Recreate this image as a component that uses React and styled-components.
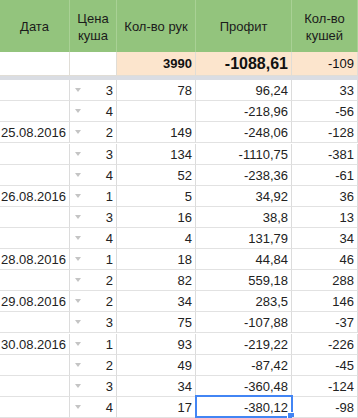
import React from "react";
import styled, { createGlobalStyle } from "styled-components";

const Global = createGlobalStyle`
  body {
    margin: 0;
    background: #fff;
    font-family: "Liberation Sans", Arial, sans-serif;
  }
`;

const Sheet = styled.div`
  display: grid;
  grid-template-columns: 70px 47px 79px 96px 66px;
  width: 358px;
  height: 418px;
  overflow: hidden;
  color: #222;
  font-size: 13px;
`;

const Head = styled.div`
  height: 52px;
  box-sizing: border-box;
  background: #93c47d;
  border-right: 1px solid #a9d195;
  display: flex;
  align-items: center;
  justify-content: center;
  text-align: center;
  line-height: 17px;
  color: #1b1b1b;
  padding-top: 1px;
`;

const Total = styled.div`
  height: 24px;
  box-sizing: border-box;
  background: ${(p) => (p.$fill ? "#fce5cd" : "#fff")};
  border-right: 1px solid #e0ddd6;
  border-bottom: 1px solid #e0ddd6;
  display: flex;
  align-items: center;
  justify-content: flex-end;
  padding-right: 3px;
  font-weight: ${(p) => (p.$bold ? 700 : 400)};
  font-size: ${(p) => p.$size || 13}px;
  color: #111;
`;

const Freeze = styled.div`
  grid-column: 1 / -1;
  height: 4px;
  background: #dadde3;
`;

const Cell = styled.div`
  position: relative;
  height: 21px;
  box-sizing: border-box;
  border-right: 1px solid #dcdcdc;
  border-bottom: 1px solid #e2e2e2;
  display: flex;
  align-items: center;
  justify-content: flex-end;
  padding: 1px 3px 0 0;
  white-space: nowrap;
`;

const Drop = styled.span`
  position: absolute;
  left: 5px;
  top: 8px;
  width: 0;
  height: 0;
  border-left: 3.5px solid transparent;
  border-right: 3.5px solid transparent;
  border-top: 4px solid #c4c4c4;
`;

const Selected = styled.span`
  position: absolute;
  left: -1px;
  top: -2px;
  right: -2px;
  bottom: -1px;
  border: 2px solid #4285f4;
  pointer-events: none;

  &::after {
    content: "";
    position: absolute;
    right: -4px;
    bottom: -4px;
    width: 6px;
    height: 6px;
    background: #4285f4;
    border: 1px solid #fff;
  }
`;

const rows = [
  ["", "3", "78", "96,24", "33"],
  ["", "4", "", "-218,96", "-56"],
  ["25.08.2016", "2", "149", "-248,06", "-128"],
  ["", "3", "134", "-1110,75", "-381"],
  ["", "4", "52", "-238,36", "-61"],
  ["26.08.2016", "1", "5", "34,92", "36"],
  ["", "3", "16", "38,8", "13"],
  ["", "4", "4", "131,79", "34"],
  ["28.08.2016", "1", "18", "44,84", "46"],
  ["", "2", "82", "559,18", "288"],
  ["29.08.2016", "2", "34", "283,5", "146"],
  ["", "3", "75", "-107,88", "-37"],
  ["30.08.2016", "1", "93", "-219,22", "-226"],
  ["", "2", "49", "-87,42", "-45"],
  ["", "3", "34", "-360,48", "-124"],
  ["", "4", "17", "-380,12", "-98"],
];

export default function App() {
  return (
    <>
      <Global />
      <Sheet>
        <Head>Дата</Head>
        <Head>
          Цена
          <br />
          куша
        </Head>
        <Head>Кол-во рук</Head>
        <Head>Профит</Head>
        <Head>
          Кол-во
          <br />
          кушей
        </Head>

        <Total />
        <Total />
        <Total $fill $bold>
          3990
        </Total>
        <Total $fill $bold $size={16}>
          -1088,61
        </Total>
        <Total $fill>-109</Total>

        <Freeze />

        {rows.map((r, i) => (
          <React.Fragment key={i}>
            <Cell>{r[0]}</Cell>
            <Cell>
              <Drop />
              {r[1]}
            </Cell>
            <Cell>{r[2]}</Cell>
            <Cell>
              {r[3]}
              {i === rows.length - 1 && <Selected />}
            </Cell>
            <Cell>{r[4]}</Cell>
          </React.Fragment>
        ))}
      </Sheet>
    </>
  );
}
